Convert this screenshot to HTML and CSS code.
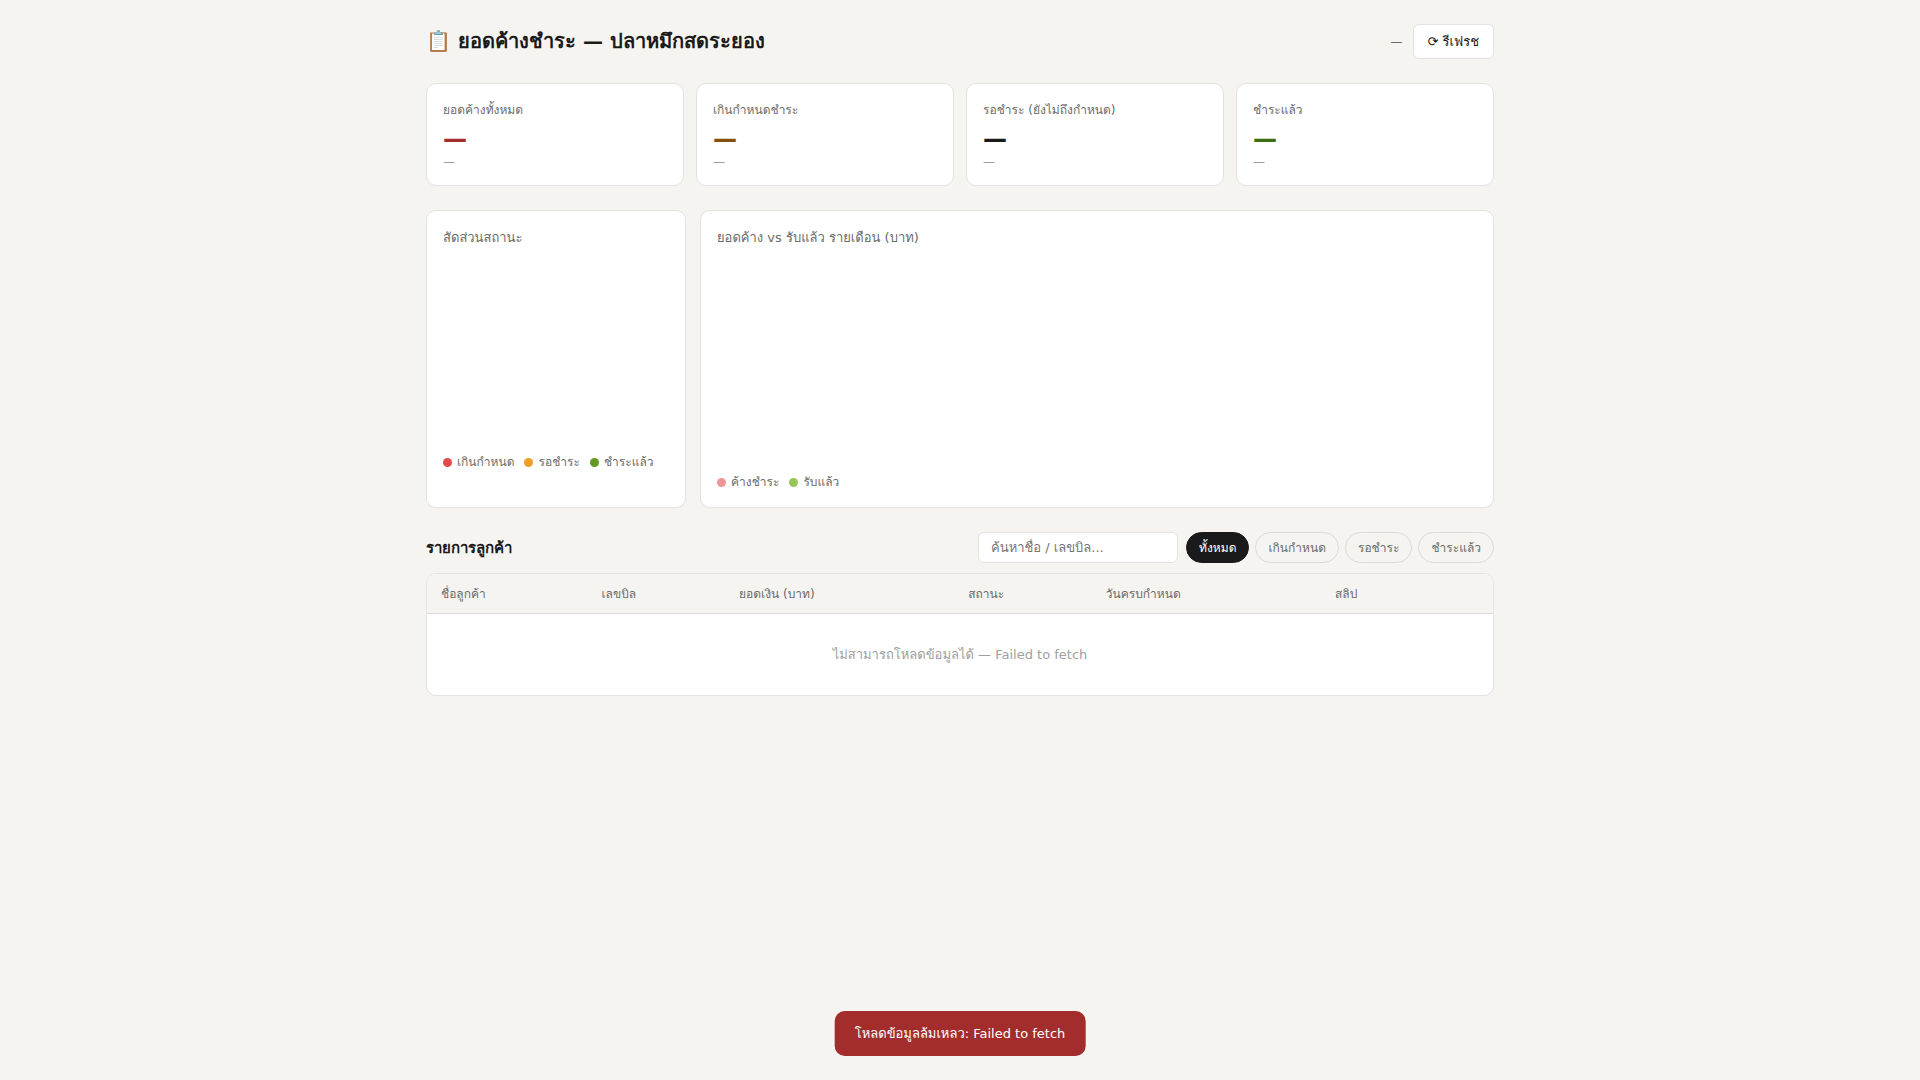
FILE: index.html
```
<!doctype html>
<html>
<head>
<meta charset="utf-8">
<meta name="viewport" content="width=device-width, initial-scale=1">
<title>ยอดค้างชำระ — ปลาหมึกสดระยอง</title>
<link rel="stylesheet" href="styles.css">
</head>

<body>
<div class="wrap">
	<header class="header">
		<h1>📋 ยอดค้างชำระ — ปลาหมึกสดระยอง</h1>
		<div class="header-right">
			<span class="updated">—</span>
			<button type="button" class="btn-refresh">⟳ รีเฟรช</button>
		</div>
	</header>

	<!-- KPI -->
	<section class="kpi-grid">
		<div class="card">
			<div class="kpi-label">ยอดค้างทั้งหมด</div>
			<div class="kpi-value red">—</div>
			<div class="kpi-sub">—</div>
		</div>
		<div class="card">
			<div class="kpi-label">เกินกำหนดชำระ</div>
			<div class="kpi-value amber">—</div>
			<div class="kpi-sub">—</div>
		</div>
		<div class="card">
			<div class="kpi-label">รอชำระ (ยังไม่ถึงกำหนด)</div>
			<div class="kpi-value">—</div>
			<div class="kpi-sub">—</div>
		</div>
		<div class="card">
			<div class="kpi-label">ชำระแล้ว</div>
			<div class="kpi-value green">—</div>
			<div class="kpi-sub">—</div>
		</div>
	</section>

	<!-- charts -->
	<section class="chart-grid">
		<div class="card">
			<h2 class="chart-title">สัดส่วนสถานะ</h2>
			<div class="chart-box chart-donut"></div>
			<div class="legend">
				<span><i class="dot dot-overdue"></i>เกินกำหนด</span>
				<span><i class="dot dot-pending"></i>รอชำระ</span>
				<span><i class="dot dot-paid"></i>ชำระแล้ว</span>
			</div>
		</div>
		<div class="card">
			<h2 class="chart-title">ยอดค้าง vs รับแล้ว รายเดือน (บาท)</h2>
			<div class="chart-box chart-bar"></div>
			<div class="legend">
				<span><i class="dot dot-due"></i>ค้างชำระ</span>
				<span><i class="dot dot-received"></i>รับแล้ว</span>
			</div>
		</div>
	</section>

	<!-- customer list -->
	<div class="toolbar">
		<h2>รายการลูกค้า</h2>
		<div class="filters">
			<input type="text" class="search" placeholder="ค้นหาชื่อ / เลขบิล..." aria-label="ค้นหาชื่อ / เลขบิล">
			<div class="pills">
				<button type="button" class="pill active">ทั้งหมด</button>
				<button type="button" class="pill">เกินกำหนด</button>
				<button type="button" class="pill">รอชำระ</button>
				<button type="button" class="pill">ชำระแล้ว</button>
			</div>
		</div>
	</div>
	<div class="table-wrap">
		<table>
			<thead>
				<tr>
					<th class="col-name">ชื่อลูกค้า</th>
					<th class="col-bill">เลขบิล</th>
					<th class="col-amount">ยอดเงิน (บาท)</th>
					<th class="col-status">สถานะ</th>
					<th class="col-due">วันครบกำหนด</th>
					<th class="col-slip">สลิป</th>
				</tr>
			</thead>
			<tbody>
				<tr><td colspan="6" class="empty">ไม่สามารถโหลดข้อมูลได้ — Failed to fetch</td></tr>
			</tbody>
		</table>
	</div>
</div>

<div class="toast" role="alert">โหลดข้อมูลล้มเหลว: Failed to fetch</div>
</body>
</html>
```
FILE: styles.css
```
*{ box-sizing:border-box; margin:0; padding:0;}
body{ background:#f5f4f0; color:#1a1a1a; font-family:"DejaVu Sans", "Loma", sans-serif; font-size:14px;}
button, input{ font-family:inherit;}
.wrap{ max-width:1100px; margin:0 auto; padding:24px 16px;}

.header{ display:flex; align-items:center; justify-content:space-between; flex-wrap:wrap; gap:12px; margin-bottom:24px;}
.header h1, .toolbar h2{ font-family:"DejaVu Sans", sans-serif; font-weight:600;}
.header h1{ font-size:20px; line-height:35px;}
.header-right{ display:flex; align-items:center; gap:10px;}
.updated{ font-size:12px; color:#6b6b6b;}
.btn-refresh{ padding:8px 14px; font-size:13px; line-height:17px; color:#1a1a1a; background:#fff; border:1px solid #e3e3e3; border-radius:6px; cursor:pointer;}

.card{ background:#fff; border:1px solid #e3e3e3; border-radius:10px; padding:16px;}
.kpi-grid{ display:grid; grid-template-columns:repeat(4, 1fr); gap:12px; margin-bottom:24px;}
.kpi-label{ font-size:12px; line-height:20px; color:#6b6b6b; margin-bottom:5px;}
.kpi-value{ font-size:24px; line-height:28px; font-weight:600;}
.kpi-sub{ margin-top:2px; font-size:12px; line-height:14px; color:#a0a0a0;}
.red{ color:#a32d2d;}
.amber{ color:#854f0b;}
.green{ color:#3b6d11;}

.chart-grid{ display:grid; grid-template-columns:260px 1fr; gap:14px; margin-bottom:24px;}
.chart-title{ font-size:13px; line-height:22px; font-weight:400; color:#6b6b6b; margin-bottom:12px;}
.chart-donut{ height:180px;}
.chart-bar{ height:200px;}
.legend{ display:flex; flex-wrap:wrap; gap:10px; margin-top:12px; font-size:12px; line-height:18px; color:#6b6b6b;}
.legend span{ display:flex; align-items:center; gap:5px;}
.dot{ width:9px; height:9px; border-radius:50%;}
.dot-overdue{ background:#e24b4a;}
.dot-pending{ background:#ef9f27;}
.dot-paid{ background:#639922;}
.dot-due{ background:#f09595;}
.dot-received{ background:#97c459;}

.toolbar{ display:flex; align-items:center; justify-content:space-between; flex-wrap:wrap; gap:8px; margin-bottom:10px;}
.toolbar h2{ font-size:15px;}
.filters{ display:flex; align-items:center; flex-wrap:wrap; gap:8px;}
.search{ width:200px; padding:6px 12px; font-size:13px; line-height:17px; color:#1a1a1a; background:#fff; border:1px solid #e3e3e3; border-radius:6px;}
.pills{ display:flex; flex-wrap:wrap; gap:6px;}
.pill{ padding:7px 12px 5px; font-size:12px; line-height:17px; color:#6b6b6b; background:transparent; border:1px solid #dadada; border-radius:20px; cursor:pointer;}
.pill.active{ color:#fff; background:#1a1a1a; border-color:#1a1a1a;}

.table-wrap{ background:#fff; border:1px solid #e3e3e3; border-radius:10px; overflow:hidden;}
table{ width:100%; table-layout:fixed; border-collapse:collapse; font-size:13px;}
th{ padding:11px 14px 9px; font-size:12px; line-height:19px; font-weight:400; text-align:left; color:#6b6b6b; background:#f5f4f0; border-bottom:1px solid #dadada;}
.col-name{ width:14%;}
.col-bill{ width:12%;}
.col-amount{ width:20%;}
.col-status{ width:12%;}
.col-due{ width:20%;}
.col-slip{ width:15%;}
.empty{ padding:32px; line-height:17px; text-align:center; color:#a0a0a0;}

.toast{ position:fixed; left:50%; bottom:24px; transform:translateX(-50%); padding:12px 20px; font-size:13px; line-height:21px; color:#fff; background:#a32d2d; border-radius:10px;}
```
